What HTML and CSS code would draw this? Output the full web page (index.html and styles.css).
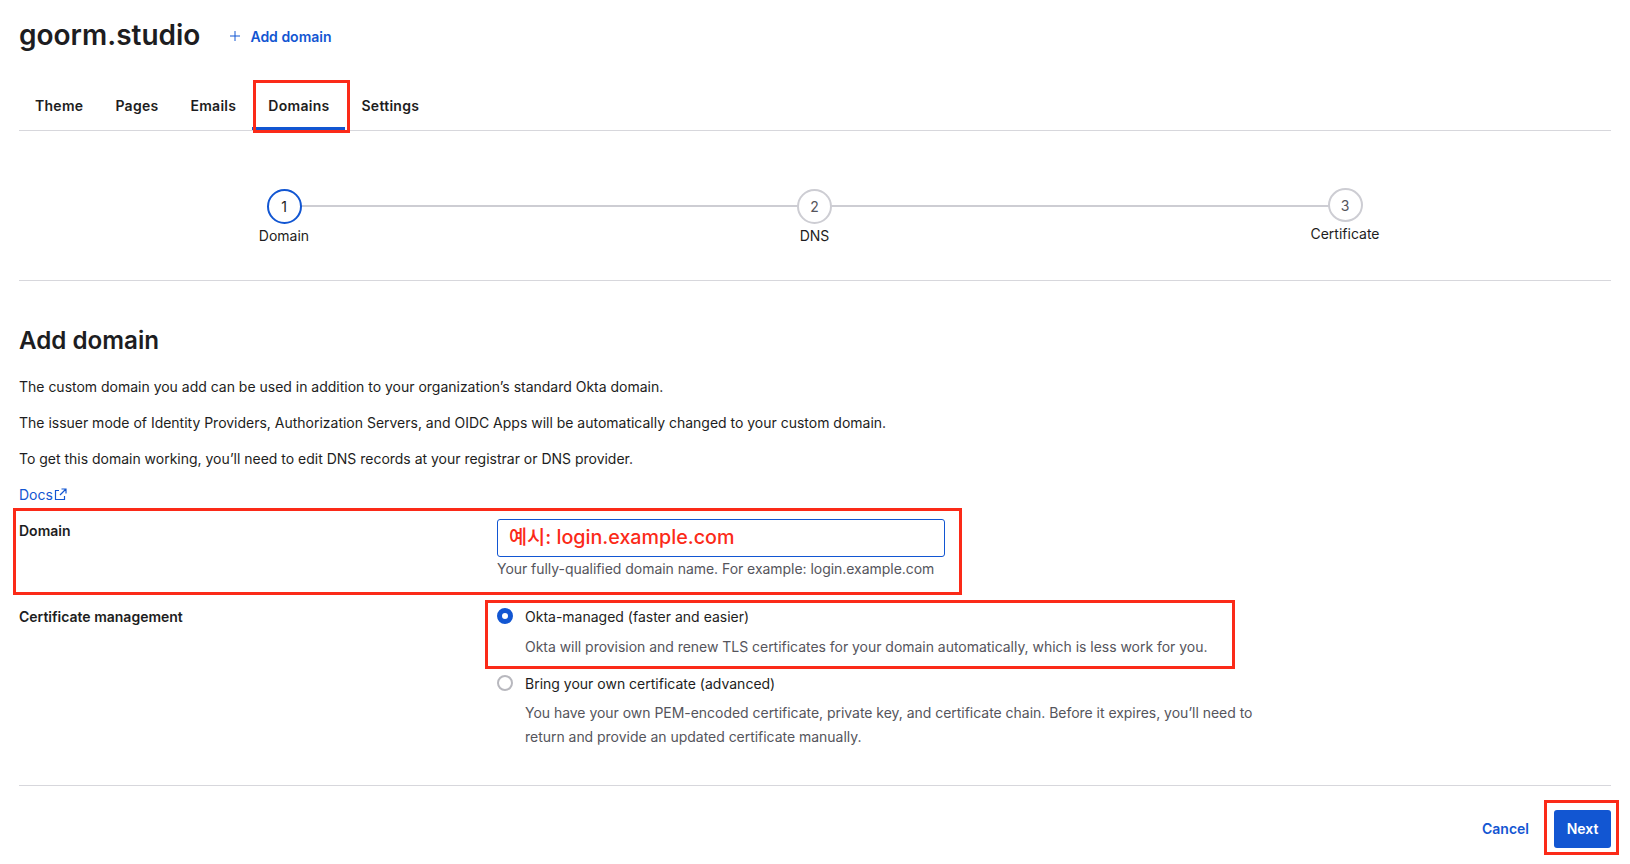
FILE: index.html
```html
<!DOCTYPE html>
<html lang="en">
<head>
<meta charset="utf-8">
<title>goorm.studio</title>
<link rel="stylesheet" href="styles.css">
</head>
<body>
<header class="head">
  <h1 class="title">goorm.studio</h1>
  <a class="add"><svg width="12" height="12" viewBox="0 0 12 12"><path d="M6 1v10M1 6h10" stroke="#1256d2" stroke-width="1" fill="none"/></svg>Add domain</a>
</header>
<nav class="tabs">
  <a class="tab">Theme</a><a class="tab">Pages</a><a class="tab">Emails</a><a class="tab active">Domains<span class="mark tabmark"></span></a><a class="tab">Settings</a>
</nav>
<section class="stepper">
  <div class="step cur"><span class="dot">1</span><span class="lab">Domain</span></div>
  <div class="step"><span class="dot">2</span><span class="lab">DNS</span></div>
  <div class="step up"><span class="dot">3</span><span class="lab">Certificate</span></div>
</section>
<main class="main">
  <h2 class="h2">Add domain</h2>
  <p class="para">The custom domain you add can be used in addition to your organization’s standard Okta domain.</p>
  <p class="para">The issuer mode of Identity Providers, Authorization Servers, and OIDC Apps will be automatically changed to your custom domain.</p>
  <p class="para">To get this domain working, you’ll need to edit DNS records at your registrar or DNS provider.</p>
  <a class="docs">Docs<svg width="13" height="13" viewBox="0 0 13 13" fill="none" stroke="#1256d2" stroke-width="1.2"><path d="M5 2.500H1.500v9h9V8M7.500 1h4.500v4.500M12 1 6 7"/></svg></a>
  <div class="row domain">
    <div class="rowlab first">Domain<span class="mark m1"></span></div>
    <div class="field">
      <div class="input">예시: login.example.com</div>
      <div class="hint">Your fully-qualified domain name. For example: login.example.com</div>
    </div>
  </div>
  <div class="row cert">
    <div class="rowlab second-lab">Certificate management</div>
    <div class="field">
      <div class="radio on"><span class="rdot"></span><span>Okta-managed (faster and easier)</span><span class="mark m2"></span></div>
      <div class="desc">Okta will provision and renew TLS certificates for your domain automatically, which is less work for you.</div>
      <div class="radio second"><span class="rdot"></span><span>Bring your own certificate (advanced)</span></div>
      <div class="desc wide">You have your own PEM-encoded certificate, private key, and certificate chain. Before it expires, you’ll need to return and provide an updated certificate manually.</div>
    </div>
  </div>
</main>
<footer class="foot">
  <a class="cancel">Cancel</a>
  <button class="next">Next<span class="mark m3"></span></button>
</footer>
</body>
</html>
```
FILE: styles.css
```css
* { box-sizing: border-box; }
html, body { margin: 0; }
body { width: 1630px; height: 864px; padding: 0 19px; font-family: Inter, "Noto Sans CJK KR", sans-serif; color: #1d1d21; background: #fff; font-size: 14px; overflow: hidden; }
.mark { position: absolute; border: 3px solid #fb2a18; pointer-events: none; }
.head { display: flex; align-items: center; height: 68px; }
.title { margin: 1px 0 0; font-size: 28px; font-weight: 600; line-height: 34px; }
.add { display: flex; align-items: center; gap: 9px; margin-left: 29px; margin-top: 4px; color: #1256d2; font-weight: 600; font-size: 14px; }
.tabs { display: flex; height: 63px; padding-top: 16px; border-bottom: 1px solid #d7d7dc; }
.tab { position: relative; padding: 0 16px; line-height: 44px; height: 46px; font-weight: 600; font-size: 14px; letter-spacing: .28px; }
.tab.active { box-shadow: inset 0 -3px 0 #1256d2; }
.tabmark { left: 1px; right: -5px; top: -4px; bottom: -3px; }
.stepper { display: flex; justify-content: space-between; height: 150px; padding: 58px 221px 0 220px; border-bottom: 1px solid #d7d7dc; position: relative; }
.step { position: relative; z-index: 1; display: flex; flex-direction: column; align-items: center; width: 90px; gap: 2px; }
.stepper::before { content: ""; position: absolute; left: 265px; right: 266px; top: 74px; height: 2px; background: #cdcdd3; }
.step.up { margin-top: -1px; }
.dot { width: 35px; height: 35px; border-radius: 50%; border: 2px solid #cdcdd3; background: #fff; display: flex; align-items: center; justify-content: center; color: #55555c; font-size: 14px; }
.up .dot { height: 34px; }
.cur .dot { border-color: #1256d2; color: #1d1d21; }
.lab { font-size: 14px; line-height: 20px; }
.main { padding-top: 45px; }
.h2 { margin: 0 0 20px; font-size: 24.2px; font-weight: 600; line-height: 30px; }
.para { margin: 0 0 15px; line-height: 21px; font-size: 14px; letter-spacing: -.01px; }
.docs { display: flex; align-items: center; gap: 1px; color: #1256d2; line-height: 21px; }
.row { display: flex; }
.domain { margin-top: 14px; height: 87px; }
.rowlab { position: relative; width: 478px; font-weight: 600; line-height: 20px; }
.first { padding-top: 2px; }
.second-lab { padding-top: 1px; }
.m1 { left: -6px; top: -11px; width: 949px; height: 87px; }
.field { position: relative; flex: 1; }
.input { width: 448px; height: 38px; border: 1px solid #1256d2; border-radius: 3px; padding-left: 11px; color: #fb2a18; font-size: 19.700px; font-weight: 500; line-height: 35px; }
.hint { margin-top: 1px; color: #55555c; line-height: 21px; letter-spacing: -.04px; }
.radio { position: relative; display: flex; align-items: center; gap: 12px; height: 20px; }
.rdot { width: 16px; height: 16px; border-radius: 50%; border: 2px solid #b8b8be; }
.on .rdot { border: 5px solid #1256d2; }
.m2 { left: -12px; top: -6px; width: 750px; height: 69px; }
.desc { margin: 9px 0 0 28px; color: #55555c; line-height: 24px; max-width: 740px; letter-spacing: -.03px; }
.second { margin-top: 14px; }
.wide { margin-top: 8px; }
.foot { position: absolute; left: 19px; right: 19px; top: 785px; display: flex; justify-content: flex-end; align-items: center; gap: 25px; border-top: 1px solid #d7d7dc; padding-top: 24px; }
.cancel { color: #1256d2; font-weight: 600; margin-top: -1px; }
.next { position: relative; width: 57px; height: 38px; padding: 0 0 2px; border: 0; border-radius: 3px; background: #1256d2; color: #fff; font: 600 14px Inter, sans-serif; }
.m3 { left: -10px; top: -10px; width: 75px; height: 55px; }
```
